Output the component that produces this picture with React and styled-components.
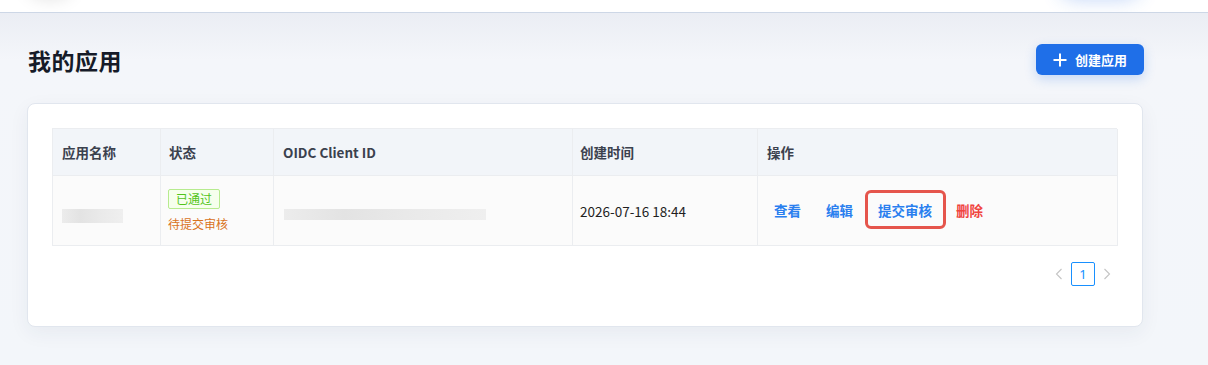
import React from "react";
import styled, { createGlobalStyle } from "styled-components";

const Global = createGlobalStyle`
  html, body { margin: 0; padding: 0; }
  body {
    font-family: "Noto Sans", "Noto Sans CJK SC", sans-serif;
    background: #f3f5f9;
    width: 1208px;
    height: 365px;
    overflow: hidden;
  }
`;

const Page = styled.div`
  width: 1208px;
  height: 365px;
  background: linear-gradient(180deg, #e8ebf2 0px, #f4f6fa 60px, #f3f6fa 100%);
  display: flex;
  flex-direction: column;
`;

const Header = styled.header`
  height: 12px;
  background: #fff;
  border-bottom: 1px solid #cdd7e6;
  overflow: hidden;
  display: flex;
  justify-content: space-between;
  align-items: flex-end;
  padding: 0 68px 0 28px;
  flex-shrink: 0;
`;

const Ghost = styled.div`
  width: ${(p) => p.$w}px;
  height: 30px;
  margin-bottom: 20px;
  border-radius: 16px;
  background: #fff;
  box-shadow: ${(p) => p.$shadow};
`;

const Main = styled.main`
  padding: 31px 65px 0 27px;
  display: flex;
  flex-direction: column;
`;

const TitleBar = styled.div`
  display: flex;
  justify-content: space-between;
  align-items: center;
  height: 31px;
  margin-bottom: 28px;
  padding-left: 1px;
`;

const Title = styled.h1`
  margin: 0;
  font-size: 23px;
  font-weight: 700;
  color: #161b28;
  font-family: "Noto Sans CJK SC", sans-serif;
  letter-spacing: 0.5px;
`;

const PrimaryButton = styled.button`
  display: flex;
  align-items: center;
  gap: 8px;
  height: 31px;
  padding: 0 17px 0 17px;
  margin-right: -1px;
  border: none;
  border-radius: 6px;
  background: #1f6fe8;
  color: #fff;
  font-family: "Noto Sans CJK SC", sans-serif;
  font-size: 13px;
  font-weight: 700;
  box-shadow: 0 4px 12px rgba(31, 111, 232, 0.22);
`;

const Card = styled.section`
  width: 1116px;
  height: 224px;
  background: #fff;
  border: 1px solid #e1e6ee;
  border-radius: 8px;
  box-shadow: 0 6px 20px rgba(30, 50, 90, 0.06);
  padding: 24px 24px 0 24px;
  box-sizing: border-box;
`;

const Table = styled.div`
  display: grid;
  grid-template-columns: 108px 113px 299px 185px 360px;
  border: 1px solid #ebedf0;
  border-right: none;
  border-bottom: none;
  width: 1065px;
  box-sizing: border-box;
`;

const Cell = styled.div`
  border-right: 1px solid #ebedf0;
  border-bottom: 1px solid #ebedf0;
  padding: 0 ${(p) => p.$pl ?? 9}px;
  display: flex;
  flex-direction: column;
  justify-content: center;
  box-sizing: border-box;
  height: ${(p) => (p.$head ? 47 : 70)}px;
  background: ${(p) => (p.$head ? "#f2f5f9" : "#fbfbfb")};
  color: ${(p) => (p.$head ? "#3b414e" : "#1f1f1f")};
  font-size: 13.5px;
  font-weight: ${(p) => (p.$head ? 700 : 400)};
  font-family: "Noto Sans CJK SC", sans-serif;
`;

const Blur = styled.div`
  width: ${(p) => p.$w}px;
  height: ${(p) => p.$h}px;
  margin-top: ${(p) => p.$mt || 0}px;
  background: linear-gradient(90deg, #ececec 0%, #e3e3e3 30%, #e9e9e9 60%, #efefef 100%);
`;

const Tag = styled.span`
  align-self: flex-start;
  display: inline-flex;
  align-items: center;
  height: 20px;
  padding: 0 7px;
  border: 1px solid #b7eb8f;
  background: #f6ffed;
  color: #52c41a;
  border-radius: 2px;
  font-size: 12px;
  box-sizing: border-box;
  margin-top: -1px;
`;

const SubStatus = styled.span`
  color: #d9731d;
  font-size: 12px;
  margin-top: 6px;
`;

const Actions = styled.div`
  display: flex;
  align-items: center;
  padding-left: 16px;
  margin-top: -2px;
`;

const ActionLink = styled.span`
  font-size: 13.5px;
  font-weight: 700;
  color: ${(p) => (p.$danger ? "#f0443f" : "#2a7fef")};
  margin-left: ${(p) => p.$gap || 0}px;
  ${(p) =>
    p.$boxed
      ? `border: 3px solid #e5554c; border-radius: 6px; height: 39px; padding: 0 11px 0 10px; box-sizing: border-box; display:flex; align-items:center;`
      : ""}
`;

const Pager = styled.div`
  display: flex;
  justify-content: flex-end;
  align-items: center;
  gap: 6px;
  margin-top: 16px;
  padding-right: 5px;
`;

const PageArrow = styled.span`
  color: #c4c4c4;
  display: flex;
  width: 12px;
  justify-content: center;
`;

const PageNum = styled.span`
  width: 24px;
  height: 24px;
  border: 1px solid #1890ff;
  border-radius: 2px;
  box-sizing: border-box;
  color: #1890ff;
  font-size: 13px;
  display: flex;
  align-items: center;
  justify-content: center;
  font-family: "Noto Sans", sans-serif;
`;

const Chevron = ({ dir }) => (
  <svg width="8" height="12" viewBox="0 0 8 12" fill="none" stroke="currentColor" strokeWidth="1.1">
    {dir === "left" ? <path d="M6.5 1 L1.5 6 L6.5 11" /> : <path d="M1.5 1 L6.5 6 L1.5 11" />}
  </svg>
);

const Plus = () => (
  <svg width="14" height="14" viewBox="0 0 14 14" stroke="#fff" strokeWidth="2" strokeLinecap="square">
    <path d="M7 1.5 V12.5 M1.5 7 H12.5" />
  </svg>
);

export default function App() {
  return (
    <>
      <Global />
      <Page>
        <Header>
          <Ghost $w={44} $shadow="0 6px 18px rgba(0,0,0,0.13)" />
          <Ghost $w={80} $shadow="0 6px 20px rgba(40,110,230,0.32)" />
        </Header>
        <Main>
          <TitleBar>
            <Title>我的应用</Title>
            <PrimaryButton>
              <Plus />
              <span>创建应用</span>
            </PrimaryButton>
          </TitleBar>
          <Card>
            <Table>
              <Cell $head>应用名称</Cell>
              <Cell $head $pl={8}>状态</Cell>
              <Cell $head>OIDC Client ID</Cell>
              <Cell $head $pl={7}>创建时间</Cell>
              <Cell $head>操作</Cell>

              <Cell>
                <Blur $w={61} $h={14} $mt={11} />
              </Cell>
              <Cell $pl={7}>
                <Tag>已通过</Tag>
                <SubStatus>待提交审核</SubStatus>
              </Cell>
              <Cell $pl={10}>
                <Blur $w={202} $h={11} $mt={7} />
              </Cell>
              <Cell $pl={7}>2026-07-16 18:44</Cell>
              <Cell $pl={0}>
                <Actions>
                  <ActionLink>查看</ActionLink>
                  <ActionLink $gap={25}>编辑</ActionLink>
                  <ActionLink $boxed $gap={12}>提交审核</ActionLink>
                  <ActionLink $danger $gap={10}>删除</ActionLink>
                </Actions>
              </Cell>
            </Table>
            <Pager>
              <PageArrow>
                <Chevron dir="left" />
              </PageArrow>
              <PageNum>1</PageNum>
              <PageArrow>
                <Chevron dir="right" />
              </PageArrow>
            </Pager>
          </Card>
        </Main>
      </Page>
    </>
  );
}
